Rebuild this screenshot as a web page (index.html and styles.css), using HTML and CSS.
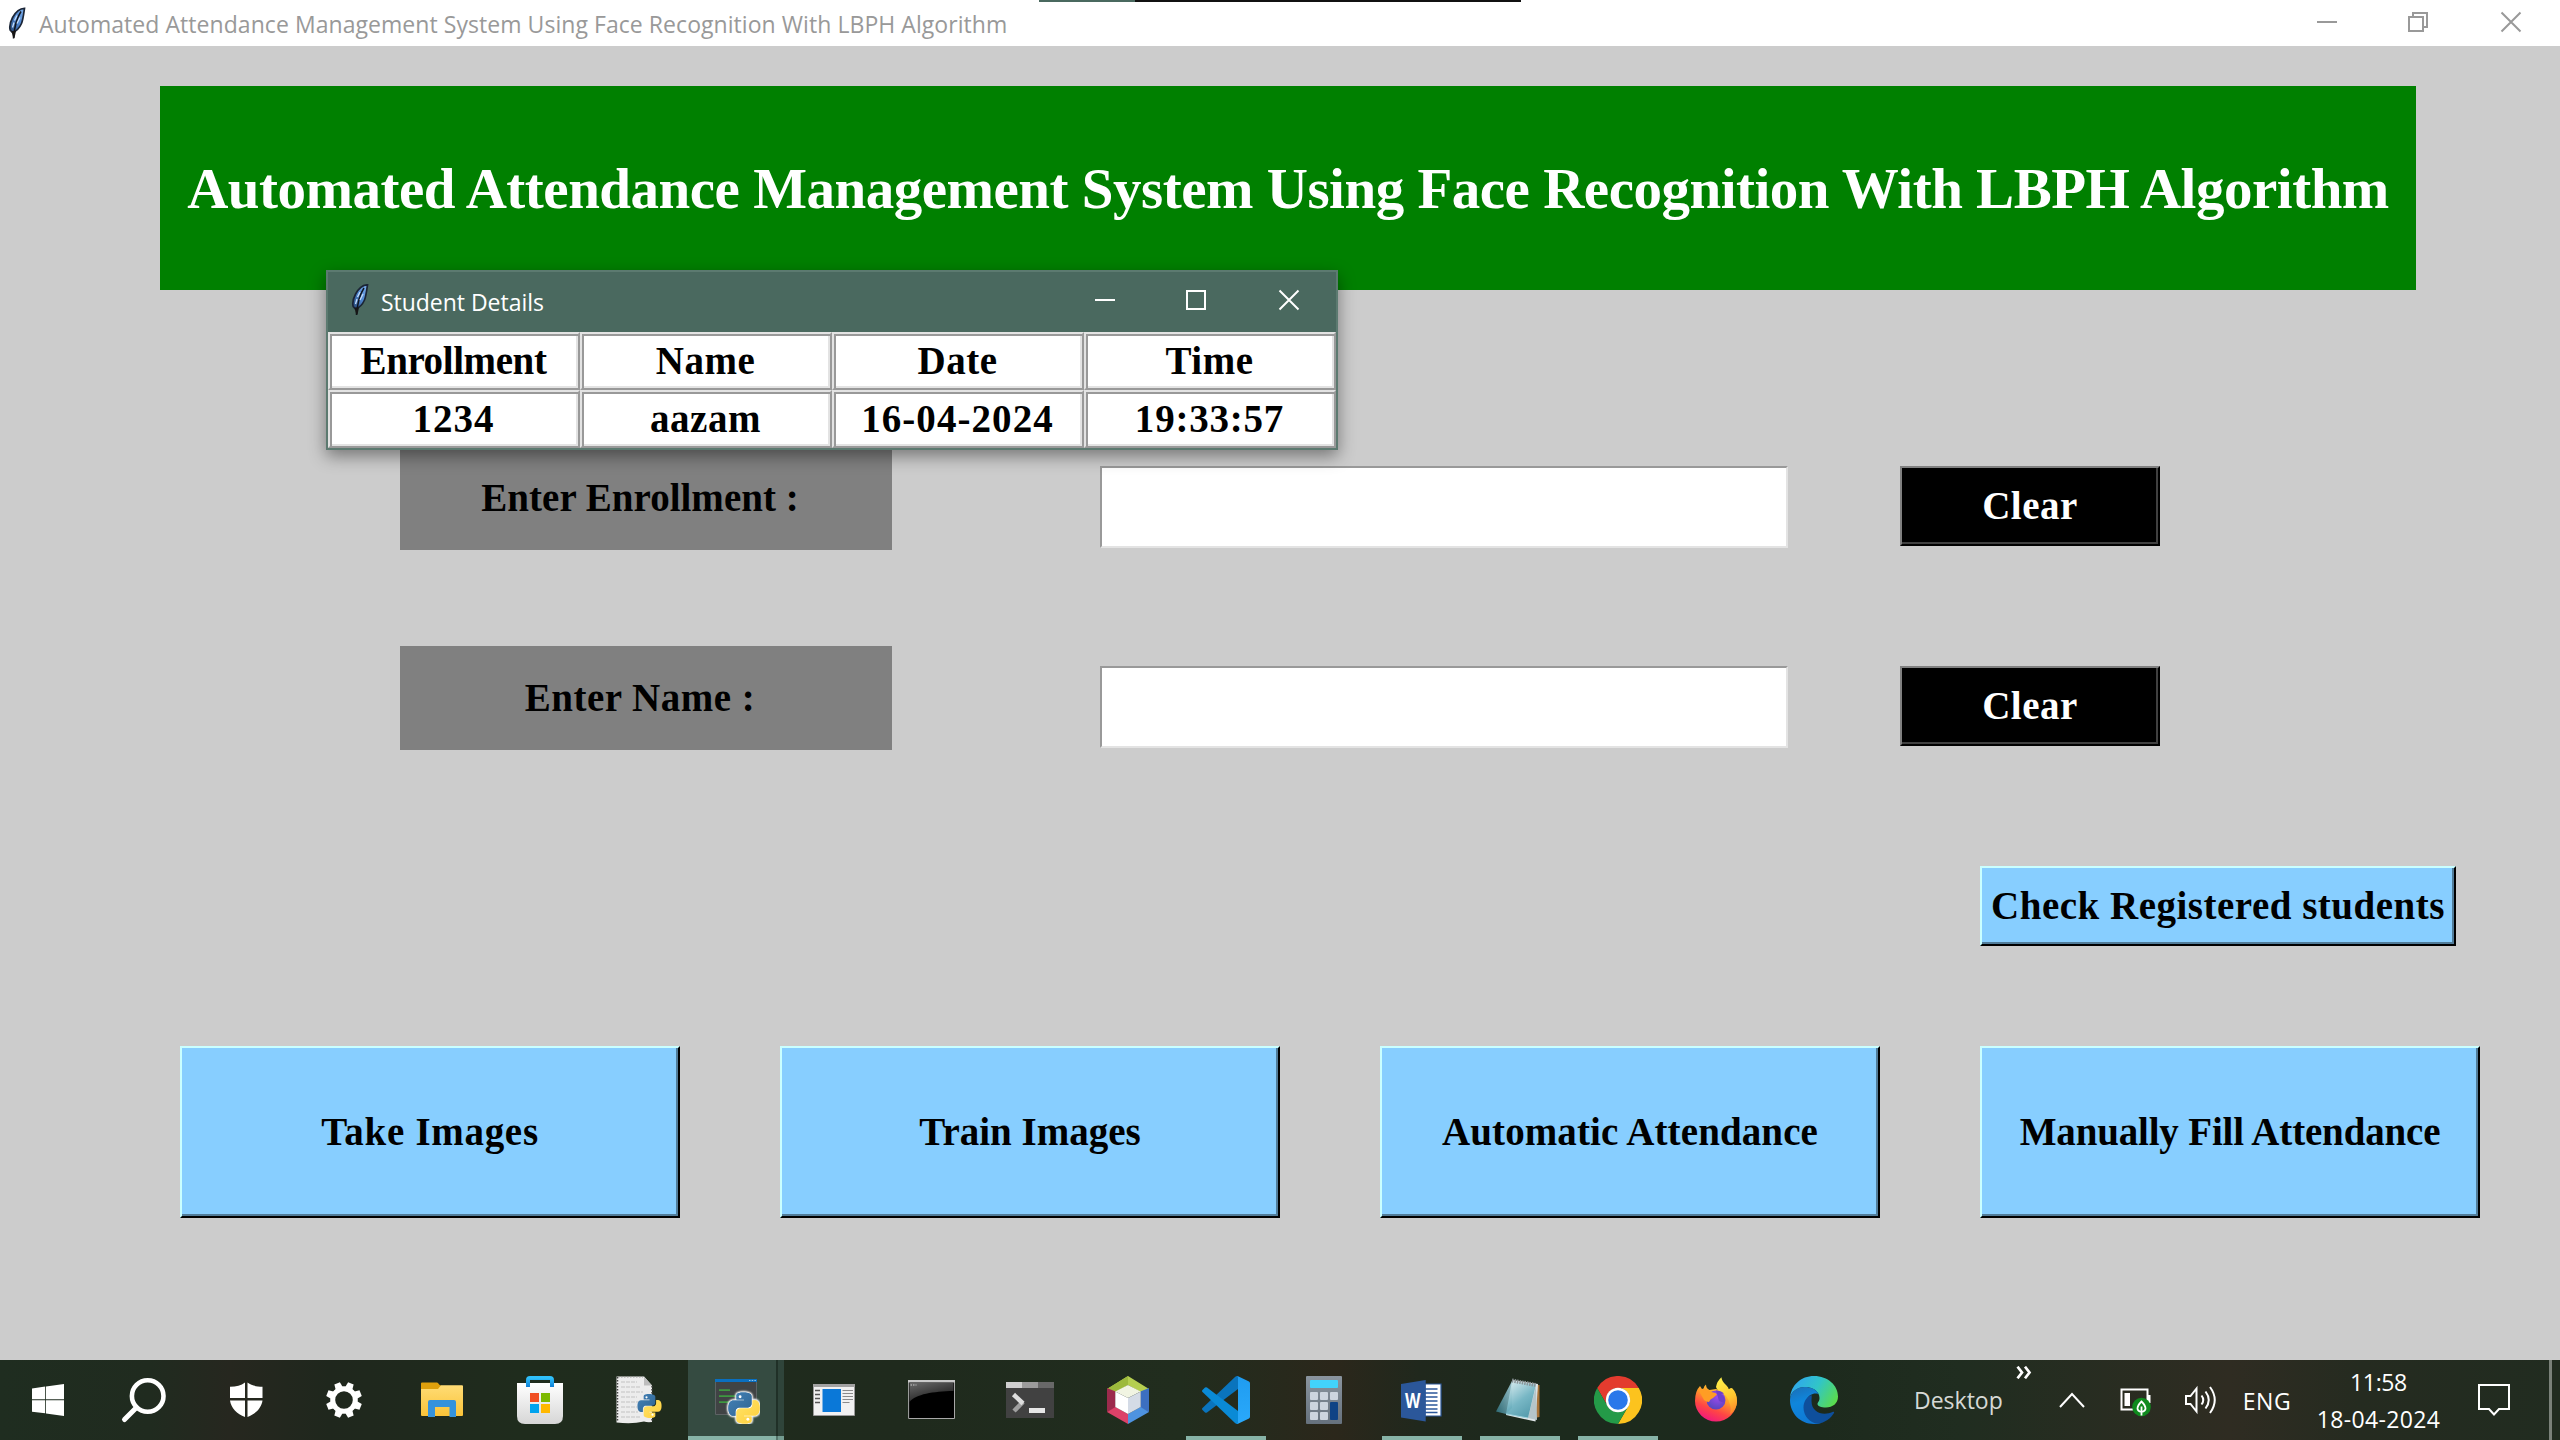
FILE: index.html
```
<!DOCTYPE html>
<html lang="en">
<head>
<meta charset="utf-8">
<title>Automated Attendance Management System</title>
<link rel="stylesheet" href="styles.css">
</head>
<body>
<svg class="defs" aria-hidden="true">
  <defs>
    <linearGradient id="gFeather" x1="1" y1="0" x2="0" y2="1"><stop offset="0" stop-color="#7fb2ee"/><stop offset=".5" stop-color="#4f86cf"/><stop offset="1" stop-color="#23436f"/></linearGradient>
    <linearGradient id="gFolder" x1="0" y1="0" x2="0" y2="1"><stop offset="0" stop-color="#ffdc75"/><stop offset="1" stop-color="#fac338"/></linearGradient>
    <linearGradient id="gBag" x1="0" y1="0" x2="0" y2="1"><stop offset="0" stop-color="#ffffff"/><stop offset="1" stop-color="#d6d6d6"/></linearGradient>
    <linearGradient id="gHandle" x1="0" y1="0" x2="0" y2="1"><stop offset="0" stop-color="#2fc0fb"/><stop offset="1" stop-color="#0f7fd6"/></linearGradient>
    <linearGradient id="gPyB" x1="0" y1="0" x2="1" y2="1"><stop offset="0" stop-color="#4482b8"/><stop offset="1" stop-color="#2f6491"/></linearGradient>
    <linearGradient id="gPyY" x1="0" y1="0" x2="1" y2="1"><stop offset="0" stop-color="#ffcf3a"/><stop offset="1" stop-color="#ffe369"/></linearGradient>
    <linearGradient id="gNoteL" x1="0" y1="1" x2="1" y2="0"><stop offset="0" stop-color="#2b6772"/><stop offset="1" stop-color="#9cc4cc"/></linearGradient>
    <linearGradient id="gNoteR" x1="0" y1="0" x2=".6" y2="1"><stop offset="0" stop-color="#e3f3f5"/><stop offset=".6" stop-color="#6fb3c2"/><stop offset="1" stop-color="#4d98aa"/></linearGradient>
    <linearGradient id="gFox" x1=".8" y1="0" x2=".3" y2="1"><stop offset="0" stop-color="#ffe03a"/><stop offset=".4" stop-color="#ff9a2a"/><stop offset=".7" stop-color="#ff4545"/><stop offset="1" stop-color="#ef1582"/></linearGradient>
    <linearGradient id="gFoxTail" x1=".3" y1="0" x2=".6" y2="1"><stop offset="0" stop-color="#fff04a"/><stop offset=".6" stop-color="#ffc62f"/><stop offset="1" stop-color="#ff8a2a"/></linearGradient>
    <radialGradient id="gGlobe" cx=".6" cy=".3" r=".8"><stop offset="0" stop-color="#a04af0"/><stop offset="1" stop-color="#4f45b8"/></radialGradient>
    <linearGradient id="gEdgeTop" x1="0" y1=".3" x2="1" y2=".7"><stop offset="0" stop-color="#2fa5ef"/><stop offset=".5" stop-color="#31c5c8"/><stop offset="1" stop-color="#5bdc4b"/></linearGradient>
    <linearGradient id="gEdgeMid" x1=".2" y1="0" x2=".5" y2="1"><stop offset="0" stop-color="#1a70b8"/><stop offset=".4" stop-color="#0f86dc"/><stop offset="1" stop-color="#0f78d4"/></linearGradient>
    <linearGradient id="gCode" x1="0" y1="0" x2="0" y2="1"><stop offset="0" stop-color="#1f9cf0"/><stop offset="1" stop-color="#2aa9fb"/></linearGradient>
    <linearGradient id="gCalc" x1="0" y1="0" x2="0" y2="1"><stop offset="0" stop-color="#8a949e"/><stop offset="1" stop-color="#66717d"/></linearGradient>
    <linearGradient id="gShine" x1="0" y1="0" x2=".6" y2="1"><stop offset="0" stop-color="#6a6a6a"/><stop offset="1" stop-color="#1a1a1a"/></linearGradient>
    <symbol id="feather" viewBox="0 0 18 32">
      <path d="M16.5.8C12 .9 7.5 4.6 4.6 10c-2 3.800-3.400 9-2.400 12.500L4.500 25c3.800-1.200 7-4.500 9-9 1.500-3.500 2.200-9.500 3-15.200z" fill="url(#gFeather)" stroke="#1b2536" stroke-width="1.700"/>
      <path d="M13 4C9 10 6.500 17 5.500 31" fill="none" stroke="#10151f" stroke-width="1.500"/>
      <path d="M9 8l-2.500 5M12 10l-3 6M6 15l-1.500 5" stroke="#c4ddfa" stroke-width="1.300" fill="none"/>
      <path d="M3.500 23.500h4.500l-1.500 7h-1.500z" fill="#161616"/>
    </symbol>
    <symbol id="snake" viewBox="-1.500 -1.500 27 27">
      <path id="half" fill="url(#gPyB)" d="M14.250.180l.9.200.730.260.590.300.450.320.340.340.250.340.160.330.100.300.040.260.020.200-.010.130V8.500l-.050.630-.130.550-.210.460-.260.380-.300.310-.330.250-.350.190-.350.140-.330.100-.300.070-.260.040-.210.020H8.770l-.690.050-.590.140-.500.220-.410.270-.330.320-.270.350-.200.360-.150.370-.100.350-.070.320-.040.270-.020.210v3.060H3.170l-.210-.030-.280-.070-.320-.120-.350-.180-.360-.260-.360-.360-.350-.460-.320-.590-.280-.730-.210-.880-.140-1.050-.050-1.230.060-1.220.160-1.040.240-.870.320-.710.360-.570.400-.440.420-.330.420-.240.400-.160.360-.100.320-.050.240-.010h.160l.060.010h8.160v-.830H6.180l-.010-2.750-.020-.370.050-.340.110-.310.170-.280.250-.260.310-.230.380-.200.440-.180.510-.150.580-.120.640-.100.710-.060.770-.040.840-.020 1.270.050z"/>
      <g transform="rotate(180 12 12)"><path fill="url(#gPyY)" d="M14.250.180l.9.200.730.260.590.300.450.320.340.340.250.340.160.330.100.300.040.260.020.200-.010.130V8.500l-.050.630-.130.550-.210.460-.260.380-.300.310-.330.250-.350.190-.350.140-.330.100-.300.070-.260.040-.210.020H8.770l-.690.050-.590.140-.500.220-.410.270-.330.320-.270.350-.200.360-.150.370-.100.350-.070.320-.040.270-.020.210v3.060H3.170l-.210-.030-.280-.070-.320-.120-.350-.180-.360-.260-.360-.360-.350-.460-.320-.590-.280-.730-.210-.880-.140-1.050-.050-1.230.060-1.220.160-1.040.240-.870.320-.710.360-.570.400-.440.420-.330.420-.240.400-.160.360-.100.320-.050.240-.010h.160l.060.010h8.160v-.830H6.180l-.010-2.750-.020-.370.050-.340.110-.310.170-.280.250-.260.310-.230.380-.200.440-.180.510-.150.580-.120.640-.100.710-.060.770-.040.840-.020 1.270.050z"/></g>
      <circle cx="9" cy="3.300" r="1.100" fill="#fff"/><circle cx="15" cy="20.700" r="1.100" fill="#fff"/>
    </symbol>
  </defs>
</svg>

<header class="titlebar">
  <svg class="feather" width="18" height="33"><use href="#feather"/></svg>
  <span class="caption caption-main">Automated Attendance Management System Using Face Recognition With LBPH Algorithm</span>
  <div class="controls">
    <svg viewBox="0 0 20 20"><path d="M0 10h20"/></svg>
    <svg viewBox="0 0 20 20"><path d="M0 5h14v14H0zM4 5V1h14v14h-4"/></svg>
    <svg viewBox="0 0 20 20"><path d="M.500.500l19 19M19.500.500l-19 19"/></svg>
  </div>
  <div class="screen-edge"></div>
</header>

<main class="app">
  <h1 class="banner">Automated Attendance Management System Using Face Recognition With LBPH Algorithm</h1>

  <form class="form">
    <div class="row">
      <label class="label ls-enrollment">Enter Enrollment :</label>
      <div class="entry"></div>
      <div class="clear">Clear</div>
    </div>
    <div class="row">
      <label class="label">Enter Name :</label>
      <div class="entry"></div>
      <div class="clear">Clear</div>
    </div>
  </form>

  <div class="button check">Check Registered students</div>
  <div class="actions">
    <div class="button ls-take">Take Images</div>
    <div class="button ls-train">Train Images</div>
    <div class="button ls-auto">Automatic Attendance</div>
    <div class="button ls-manual">Manually Fill Attendance</div>
  </div>
</main>

<section class="dialog">
  <div class="dialog-bar">
    <svg class="feather" width="18" height="32"><use href="#feather"/></svg>
    <span class="caption">Student Details</span>
    <div class="controls">
      <svg viewBox="0 0 20 20"><path d="M0 10h20"/></svg>
      <svg viewBox="0 0 20 20"><path d="M0 1h18v18H0z"/></svg>
      <svg viewBox="0 0 20 20"><path d="M.500.500l19 19M19.500.500l-19 19"/></svg>
    </div>
  </div>
  <div class="table">
    <div class="cell ls-head">Enrollment</div><div class="cell">Name</div><div class="cell">Date</div><div class="cell">Time</div>
    <div class="cell ls-date">1234</div><div class="cell">aazam</div><div class="cell ls-date">16-04-2024</div><div class="cell ls-time">19:33:57</div>
  </div>
</section>

<footer class="taskbar">
  <div class="task start"><svg viewBox="0 0 48 48"><path fill="#fff" d="M8 12.400l13.200-1.900v12.800H8zM22 10.400L40 8v15.300H22zM8 24.200h13.200v13L8 35.800zM22 24.200h18V40l-18-2.600z"/></svg></div>
  <div class="task search"><svg viewBox="0 0 48 48"><circle cx="27.700" cy="20" r="15.800" fill="none" stroke="#fff" stroke-width="4.600"/><path d="M16.500 31.500L4.500 43.500" stroke="#fff" stroke-width="5" stroke-linecap="round"/></svg></div>
  <div class="task"><svg viewBox="0 0 48 48"><path fill="#fff" d="M23 6.500c-4 3-8.500 4-15 4.300V22h15zM25.500 6.500c4 3 8.500 4 15 4.300V22h-15zM8 24.500h15V41C15 38 9 32 8 24.500zM25.500 24.500h15C39.500 32 33.500 38 25.500 41z"/></svg></div>
  <div class="task"><svg viewBox="0 0 48 48"><circle cx="24" cy="24" r="11.300" fill="none" stroke="#fff" stroke-width="5"/><g fill="#fff" transform="rotate(22.500 24 24)"><path id="tooth" d="M21 6h6l1 7h-8z"/><use href="#tooth" transform="rotate(45 24 24)"/><use href="#tooth" transform="rotate(90 24 24)"/><use href="#tooth" transform="rotate(135 24 24)"/><use href="#tooth" transform="rotate(180 24 24)"/><use href="#tooth" transform="rotate(225 24 24)"/><use href="#tooth" transform="rotate(270 24 24)"/><use href="#tooth" transform="rotate(315 24 24)"/></g></svg></div>
  <div class="task"><svg viewBox="0 0 48 48"><path fill="#dfa00c" d="M4 6.500h15c1.500 0 2 3 4 3v5H3v-7q0-1 1-1z"/><path fill="url(#gFolder)" d="M3 13h17l3-3.700h21q1 0 1 1V39q0 1-1 1H4q-1 0-1-1z"/><path fill="#3492dc" d="M10 41V26q0-2 2-2h24q2 0 2 2v15h-6.500V31H17v10z"/></svg></div>
  <div class="task"><svg viewBox="0 0 48 48"><path fill="url(#gBag)" d="M1 7h46v33q0 8-8 8H9q-8 0-8-8z"/><path d="M12 11V4q0-2 2-2h20q2 0 2 2v7" fill="none" stroke="url(#gHandle)" stroke-width="4"/><path fill="#f04e23" d="M14 17h9v9h-9z"/><path fill="#7db900" d="M25 17h9v9h-9z"/><path fill="#00a3ee" d="M14 28h9v9h-9z"/><path fill="#ffb800" d="M25 28h9v9h-9z"/></svg></div>
  <div class="task"><svg viewBox="0 0 48 48"><path fill="#ececec" d="M2.500.500H30l8 9V46q-5 .500-8-.500-12 3-27.500 1z"/><path fill="#bdbdbd" d="M30 .500l8 9h-8z"/><path d="M7 6h16M7 11h20M7 16h22M7 21h16M7 26h18M7 31h16M7 36h17M7 41h20" stroke="#cfcfcf" stroke-width="1.500" stroke-dasharray="4 1"/><path d="M3.500 1v45M38 10v36" stroke="#444" stroke-width="1.500" stroke-dasharray="1.500 1.500"/><path d="M4 1h25" stroke="#999" stroke-dasharray="1.500 1.500"/><use href="#snake" x="22" y="16.500" width="27" height="27"/></svg></div>
  <div class="task active"><svg viewBox="0 0 48 48"><path fill="#404344" stroke="#5d6264" d="M3.500 3.500h41v35h-41z"/><path fill="#0a6fc0" d="M3 3h42v3H3z"/><path d="M37 4.500h7" stroke="#8cc4ee" stroke-dasharray="1.500 1.200"/><path d="M7 14.200h11M7 20.200h18M7 26.200h11" stroke="#3e9840" stroke-width="1.700"/><use class="halo" href="#snake" x="14.500" y="14.500" width="35" height="35"/><use href="#snake" x="14.500" y="14.500" width="35" height="35"/></svg></div>
  <div class="task"><svg viewBox="0 0 48 48"><path fill="#f1f1f1" stroke="#9a9a9a" d="M3.500 8.500h41v31h-41z"/><path fill="#a2a2a2" d="M3 8h42v3H3z"/><path fill="#0a78d8" d="M12.500 13H31v23H12.500z"/><path d="M5 14.500h5M5 18.500h5M5 22.500h5M5 26.500h5" stroke="#555" stroke-width="1.300"/><path d="M32.500 14.500h10.500M32.500 17.500h10.500M32.500 20.500h10.500M32.500 23.500h10.500M32.500 26.500h7" stroke="#8a8a8a" stroke-width="1.200"/></svg></div>
  <div class="task"><svg viewBox="0 0 48 48"><path fill="#000" stroke="#a8a8a8" d="M.600 4.500H46.500v38H.600z"/><path fill="#c9c9c9" d="M0 4h47v2.500H0z"/><path fill="url(#gShine)" d="M1.500 7h44v8C25 15.500 8 18 1.500 26z"/><path d="M2.500 9h6" stroke="#ccc" stroke-dasharray="1.500 1"/></svg></div>
  <div class="task"><svg viewBox="0 0 48 48"><path fill="#414141" d="M0 6h48v36H0z"/><path fill="#cfcfcf" d="M0 6h16v6H0z"/><path fill="#9b9b9b" d="M16 6h16v6H16z"/><path fill="#686868" d="M32 6h16v6H32z"/><path d="M17 26l-9 9" stroke="#a0a0a0" stroke-width="4.500"/><path d="M7.500 18.500L17 27.500" stroke="#dedede" stroke-width="4.500"/><path fill="#e6e6e6" d="M23 32h16v5H23z"/></svg></div>
  <div class="task"><svg viewBox="0 0 48 48"><path fill="#b5cf50" d="M24 0l21 13-8.300 3L24 9l-12.700 7L3 13z"/><path fill="#9dba3c" d="M24 0v9l-12.700 7L3 13z"/><path fill="#3c6fc0" d="M45 12v24l-8.500-4V15.500z"/><path fill="#9c2a4c" d="M3 12v24l8.500-4V15.500z"/><path fill="#dd4168" d="M3 36l8.500-5L24 38v10z"/><path fill="#4e93e0" d="M45 36l-8.500-5L24 38v10z"/><path fill="#f1f4e2" d="M24 9l12.700 6.500L24 22l-12.700-6.500z"/><path fill="#fff" d="M11.300 15.500L24 22v16l-12.700-7z"/><path fill="#d4dbe6" d="M36.700 15.500L24 22v16l12.700-7z"/></svg></div>
  <div class="task running"><svg viewBox="0 0 48 48"><path fill="#0a74bd" d="M36 0v13L5 36.500q-1 .700-2 0L.500 34q-1-1 0-2L33 1q1.500-1.200 3-1z"/><path fill="#0a8ad6" d="M36 48V35L5 11.500q-1-.700-2 0L.500 14q-1 1 0 2L33 47q1.500 1.200 3 1z"/><path fill="url(#gCode)" d="M35.500 0L47 5.500q1 .500 1 2v33q0 1.500-1 2L35.500 48q.500-.500.500-2V2q0-1.500-.500-2z"/></svg></div>
  <div class="task"><svg viewBox="0 0 48 48"><rect x="6" width="36" height="48" rx="1" fill="url(#gCalc)"/><rect x="10" y="4" width="28" height="8" rx="1" fill="#42d3fb"/><g fill="#ccd4de"><rect x="10" y="16" width="8" height="8" rx="1"/><rect x="20" y="16" width="8" height="8" rx="1"/><rect x="30" y="16" width="8" height="8" rx="1"/><rect x="10" y="26" width="8" height="8" rx="1"/><rect x="20" y="26" width="8" height="8" rx="1"/><rect x="10" y="36" width="8" height="8" rx="1"/><rect x="20" y="36" width="8" height="8" rx="1"/></g><rect x="30" y="26" width="8" height="18" rx="1" fill="#0f4385"/></svg></div>
  <div class="task running"><svg viewBox="0 0 48 48"><path fill="#fff" stroke="#2b579a" stroke-width="1.200" d="M27 8h16v32H27z"/><path d="M27 13h12.500M27 17h12.500M27 21h12.500M27 25h12.500M27 29h12.500M27 33h12.500M27 36.500h12.500" stroke="#2b579a" stroke-width="1.500"/><path fill="#2b579a" d="M3 8l24.700-4v41.500L3 41.500z"/><text x="7" y="31.500" class="word" textLength="15.500" lengthAdjust="spacingAndGlyphs">W</text></svg></div>
  <div class="task running"><svg viewBox="0 0 48 48"><path fill="#a8743a" d="M40 9h3.500v32l-5 1z"/><path fill="#dfe6e8" d="M17 4l25 4-2.500 37.500L10 39z"/><path fill="#b5c5ca" d="M40 10l1 34-9-2z"/><path fill="url(#gNoteL)" d="M16 5L0 35.500 10 38l6-6z"/><path fill="url(#gNoteR)" d="M16 5l24 3.500L32 42 10 38z" opacity=".92"/><path d="M16 4.500l24 4.500" stroke="#8a9396" stroke-width="4" stroke-dasharray="1.500 1"/><path d="M10 38l22 4" stroke="#9fd3de"/></svg></div>
  <div class="task running"><svg viewBox="0 0 48 48"><path fill="#e33b2e" d="M3.200 12A24 24 0 0 1 44.800 12H24A12 12 0 0 0 13.600 30z"/><path fill="#fcc31e" d="M44.800 12A24 24 0 0 1 24 48l10.400-18A12 12 0 0 0 24 12z"/><path fill="#249a48" d="M24 48A24 24 0 0 1 3.200 12l10.400 18a12 12 0 0 0 20.800 0z"/><circle cx="24" cy="24" r="12.200" fill="#fff"/><circle cx="24" cy="24" r="9.800" fill="#2a78ea"/></svg></div>
  <div class="task"><svg viewBox="0 0 48 48"><path fill="url(#gFox)" d="M8 10l2 3 1.500-.500Q12 10 14 8.500q0 4 3.500 5.500L24 13l6 2 10-3q5 5 5 13a21 20.500 0 0 1-42 0Q3 15 8 10z"/><circle cx="24" cy="24" r="9.500" fill="url(#gGlobe)"/><path fill="#ff9d24" d="M7 15q4-3 9-1 3 2.500 7.500 3l1.500 1.500-4 3.500q-3 1-4 4-3 0-5-2z"/><path fill="url(#gFoxTail)" d="M29.500 1.200q0 4 5 8.300 2 1.500 2.500 4.500l2-2q6 6 6 14-1 8-7 12 2-6-1-12-1-5-6-8.500-6-3-7-6.500Q25 5 29.500 1.200z"/><path fill="#6e40c9" d="M24 14.500q5 0 8 3l-3 .500q5 3 3.500 9L27 25z"/></svg></div>
  <div class="task"><svg viewBox="0 0 48 48"><path fill="url(#gEdgeTop)" d="M0 22C1 9 11 0 24 0c14 0 24 9.500 24 20.500 0 7-5.500 11-12 11-5 0-8.500-1.500-8.500-3.500 0-1.500 2-2.500 2-6C29.500 16 24 11 15 11 8 11 1.500 15 0 22z"/><path fill="url(#gEdgeMid)" d="M0 24C0 17 6 11 14.500 11 21 11 26.500 13.500 28.500 18c-5-1.500-9.500 1-11.500 5-5 10 2 20 14 24-3 1-5 1-7 1C10 48 0 37 0 24z"/><path fill="#0e4f9c" d="M21.500 19c-4.500 1.500-8 6.500-8 12.500C13.500 40 20 47 27.500 47.700 35 47 41 42 44 37c.500-1-.500-1.500-1.500-1-9 4-21 1-21-11 0-2.500.500-4 0-6z"/></svg></div>

  <div class="tray">
    <span class="desktop">Desktop</span>
    <div class="more"><svg width="16" height="13" viewBox="0 0 16 13"><path d="M1.500.700L6 6.500l-4.500 5.800M9 .700l4.500 5.800L9 12.300" fill="none" stroke="#fff" stroke-width="2.700"/></svg></div>
    <div class="slot chevron"><svg width="26" height="16" viewBox="0 0 26 16"><path d="M1 15L13 2l12 13" fill="none" stroke="#fff" stroke-width="2"/></svg></div>
    <div class="slot battery"><svg width="32" height="32" viewBox="0 0 32 32"><path d="M1.500 3.500h26v20h-26z" fill="none" stroke="#fff" stroke-width="2"/><path fill="#fff" d="M28 9h2.500v8H28zM4.500 7H10v13H4.500z"/><circle cx="21.500" cy="21" r="9.300" fill="#0f8a1e"/><path d="M21.500 15.500q-4 4-4 7 0 2.500 4 3.500 4-1 4-3.500 0-3-4-7zM21.500 20.500v9" fill="none" stroke="#fff" stroke-width="1.800"/></svg></div>
    <div class="slot volume"><svg width="34" height="30" viewBox="0 0 34 30"><path d="M2 11h4.500l6-7.500v23l-6-7.500H2z" fill="none" stroke="#fff" stroke-width="2"/><path d="M17.500 10.500q3.500 4.500 0 9M21.500 6.500q6.500 8.500 0 17M26 2q9.500 13 0 26" fill="none" stroke="#fff" stroke-width="2"/></svg></div>
    <span class="slot lang">ENG</span>
    <div class="clock"><span class="hour">11:58</span><span class="day">18-04-2024</span></div>
    <div class="slot notify"><svg width="34" height="34" viewBox="0 0 34 34"><path d="M2 2h30v24H22l-5 5.500-5-5.500H2z" fill="none" stroke="#fff" stroke-width="2"/></svg></div>
    <div class="peek"></div>
  </div>
</footer>
</body>
</html>
```

FILE: styles.css
```
* { box-sizing: border-box; }
body {
  margin: 0;
  width: 2560px;
  height: 1440px;
  overflow: hidden;
  position: relative;
  display: flex;
  flex-direction: column;
  background: #ccc;
  font: bold 39px/46px "Liberation Serif", "Times New Roman", serif;
  letter-spacing: .5px;
  color: #000;
}
svg { display: block; flex: none; }
.defs { position: absolute; width: 0; height: 0; }

/* Main window caption */
.titlebar {
  position: relative;
  height: 46px;
  flex: none;
  background: #fff;
  color: #999;
  display: flex;
  align-items: center;
  padding: 0 3px 0 8px;
}
.caption {
  font: 23px/32px "Open Sans", "Segoe UI", sans-serif;
  letter-spacing: -.03px;
  white-space: nowrap;
}
.titlebar .caption { margin-left: 13px; padding-top: 2px; letter-spacing: .055px; }
.controls { margin-left: auto; display: flex; }
.controls svg {
  width: 20px;
  height: 20px;
  margin: 0 36px;
  fill: none;
  stroke: currentColor;
  stroke-width: 2;
  overflow: visible;
}
.titlebar .controls { padding-bottom: 2px; }
.screen-edge {
  position: absolute;
  left: 1039px;
  top: 0;
  width: 482px;
  height: 2px;
  background: linear-gradient(90deg, #4a695f 96px, #111 96px);
}

/* Application body */
.app { height: 1314px; flex: none; }
.banner {
  margin: 40px 0 0 160px;
  width: 2256px;
  height: 204px;
  background: #008000;
  color: #fff;
  font-size: 57px;
  line-height: 66px;
  letter-spacing: -.49px;
  padding-top: 2px;
  display: flex;
  align-items: center;
  justify-content: center;
  white-space: nowrap;
}
.form { margin: 156px 0 0 400px; display: flex; flex-direction: column; gap: 96px; }
.row { display: flex; height: 104px; }
.label {
  width: 492px;
  background: #808080;
  display: flex;
  align-items: center;
  justify-content: center;
  padding: 0 12px 1px 0;
}
.entry {
  margin: 20px 0 0 208px;
  width: 688px;
  height: 82px;
  background: #fff;
  border: 2px solid;
  border-color: #999 #e3e3e3 #e3e3e3 #999;
}
.clear {
  margin: 20px 0 0 112px;
  width: 260px;
  height: 80px;
  background: #000;
  color: #fff;
  border: 2px solid;
  border-color: #808080 #000 #000 #808080;
  box-shadow: inset -2px -2px #404040;
}
.clear, .button {
  display: flex;
  align-items: center;
  justify-content: center;
  padding-bottom: 1px;
  white-space: nowrap;
}
.button {
  width: 500px;
  height: 172px;
  background: #87ceff;
  border: 2px solid;
  border-color: #caffff #000 #000 #caffff;
  box-shadow: inset -2px -2px #517c99;
}
.check { width: 476px; height: 80px; margin: 116px 0 0 1980px; }
.actions { margin: 100px 0 0 180px; display: flex; gap: 100px; }
.ls-enrollment { letter-spacing: .02px; }
.ls-take { letter-spacing: .7px; }
.ls-train { letter-spacing: 0; }
.ls-auto { letter-spacing: .12px; }
.ls-manual { letter-spacing: -.17px; }
.ls-head { letter-spacing: -.4px; }
.ls-date { letter-spacing: 1.06px; }
.ls-time { letter-spacing: .79px; }

/* Student details window */
.dialog {
  position: absolute;
  left: 326px;
  top: 270px;
  width: 1012px;
  height: 180px;
  border: 2px solid #5c7a70;
  background: #4a695f;
  box-shadow: 0 6px 16px rgba(0, 0, 0, .42);
}
.dialog-bar {
  height: 60px;
  display: flex;
  align-items: center;
  padding: 0 1px 4px 23px;
  color: #fff;
}
.dialog-bar .caption { margin-left: 12px; padding-top: 4px; }
.table { display: grid; grid-template-columns: repeat(4, 252px); grid-auto-rows: 58px; }
.cell {
  display: flex;
  align-items: center;
  justify-content: center;
  padding-right: 1px;
  background: #fff;
  border: 2px solid;
  border-color: #e3e3e3 #999 #999 #e3e3e3;
  box-shadow: inset 2px 2px #999, inset -2px -2px #e3e3e3;
}

/* Taskbar */
.taskbar {
  height: 80px;
  flex: none;
  display: flex;
  letter-spacing: 0;
  background: linear-gradient(90deg, #1f2d20 0, #202b1f 150px, #26271f 230px, #1f271d 330px, #1f2c1d 520px, #1f2a1d 900px, #212d1e 1180px, #2b271b 1335px, #20281d 1420px, #1c2a1d 1550px, #1d2a1d 1820px, #202d20 1960px, #2f2c22 2230px, #252b20 2360px, #212c20 2560px);
}
.task {
  width: 98px;
  height: 80px;
  flex: none;
  display: flex;
  align-items: center;
  justify-content: center;
}
.task svg { width: 48px; height: 48px; }
.start { width: 96px; }
.search { width: 101px; padding-right: 5px; }
.running { background: linear-gradient(#87b3a7, #87b3a7) 9px 76px / 80px 4px no-repeat; }
.active {
  margin: 0 -1px 0 1px;
  padding-right: 2px;
  background:
    linear-gradient(90deg, #87b3a7 88px, #55766c 88px, #55766c 90px, #749b90 90px, #749b90 96px, transparent 96px) 0 76px / 98px 4px no-repeat,
    linear-gradient(90deg, #354b41 88px, #203027 88px, #203027 90px, #2f443a 90px, #2f443a 96px, transparent 96px);
}
.halo { filter: drop-shadow(0 0 1px #fff) drop-shadow(0 0 1px #fff) drop-shadow(0 0 .5px #fff); }
.word { font: bold 21px "Open Sans", sans-serif; fill: #fff; }
.tray {
  margin-left: 51px;
  display: flex;
  font: 23px/37px "Open Sans", "Segoe UI", sans-serif;
  color: #fff;
}
.desktop { width: 98px; padding-top: 22px; color: #d6d9d6; }
.more { width: 32px; padding: 6px 0 0 4px; }
.slot { display: flex; align-items: center; justify-content: center; }
.chevron { width: 56px; }
.battery { width: 72px; padding-top: 3px; }
.volume { width: 58px; }
.lang { width: 76px; padding: 2px 2px 0 0; letter-spacing: .6px; }
.clock { width: 145px; padding-top: 4px; text-align: center; }
.clock span { display: block; }
.hour { letter-spacing: -.37px; }
.day { letter-spacing: .35px; }
.notify { width: 86px; }
.peek { margin-left: 12px; width: 3px; background: #7a8179; }
```
